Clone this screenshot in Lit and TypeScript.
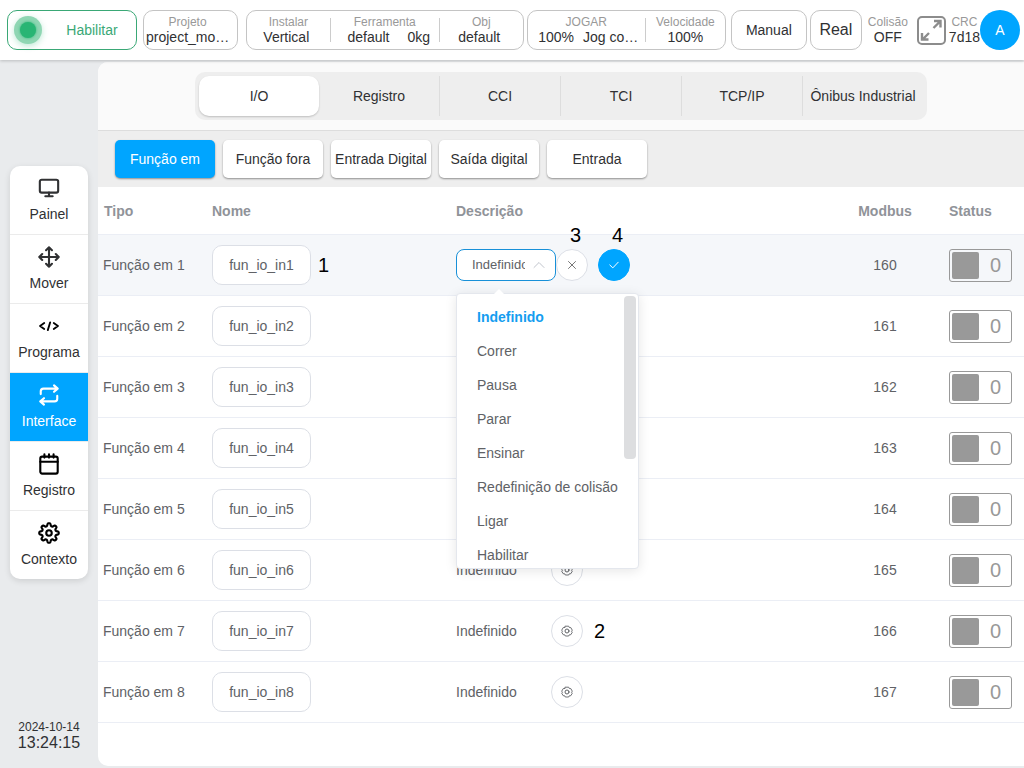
import { LitElement, html, css, svg } from "lit";
import { customElement, state } from "lit/decorators.js";
import { classMap } from "lit/directives/class-map.js";

// Closed outline of a gear with rounded teeth, centred on (cx, cy).
const gear = (cx: number, cy: number, radius: number, depth: number, teeth: number) =>
  Array.from({ length: 96 }, (_, i) => {
    const a = (i / 96) * Math.PI * 2;
    const r = radius + depth * Math.tanh(2 * Math.cos(teeth * a));
    return `${i ? "L" : "M"}${(cx + r * Math.sin(a)).toFixed(2)} ${(cy - r * Math.cos(a)).toFixed(2)}`;
  }).join("") + "Z";

const icons: Record<string, unknown> = {
  painel: svg`<rect x="2" y="3" width="20" height="14" rx="2"/><path d="M12 17v4M8 21h8"/>`,
  mover: svg`<path d="M12 1.500v21M1.500 12h21M8.800 4.600 12 1.400l3.200 3.200M8.800 19.400l3.200 3.200 3.200-3.200M4.600 8.800 1.400 12l3.200 3.200M19.400 8.800l3.200 3.200-3.200 3.200"/>`,
  programa: svg`<path d="M6.800 8.800 2.200 12l4.600 3.200M17.200 8.800l4.600 3.200-4.600 3.200M13.300 8l-2.600 8.500" stroke-width="2"/>`,
  interface: svg`<path d="M17.500 1.500 21.500 5l-4 3.500M3 11V8a3 3 0 0 1 3-3h15M6.500 22.500 2.500 19l4-3.500M21 13v3a3 3 0 0 1-3 3H3"/>`,
  registro: svg`<rect x="2.500" y="4" width="19" height="18.500" rx="2"/><path d="M2.500 9.500h19M7 1.500V5M12 1.500V5M17 1.500V5"/>`,
  contexto: svg`<circle cx="12" cy="12" r="3"/><path d=${gear(12, 12, 9.2, 1.5, 8)} />`,
};

const navItems = [
  ["painel", "Painel"],
  ["mover", "Mover"],
  ["programa", "Programa"],
  ["interface", "Interface"],
  ["registro", "Registro"],
  ["contexto", "Contexto"],
];
const tabs = ["I/O", "Registro", "CCI", "TCI", "TCP/IP", "Ônibus Industrial"];
const groups = ["Função em", "Função fora", "Entrada Digital", "Saída digital", "Entrada"];
const options = ["Indefinido", "Correr", "Pausa", "Parar", "Ensinar", "Redefinição de colisão", "Ligar", "Habilitar"];
const rows = Array.from({ length: 8 }, (_, i) => ({ n: i + 1, modbus: 160 + i }));

const base = css`
  * { box-sizing: border-box; }
  button, input, select { font: inherit; color: inherit; margin: 0; padding: 0; }
  button { cursor: pointer; background: none; border: none; }
  svg { display: block; fill: none; stroke: currentColor; stroke-linecap: round; stroke-linejoin: round; }
`;

@customElement("status-bar")
class StatusBar extends LitElement {
  static styles = [base, css`
    :host { display: flex; align-items: center; gap: 3px; height: 60px; padding: 0 4px 0 7px; background: #fff; box-shadow: 0 1px 3px rgba(0, 0, 0, 0.2); position: relative; white-space: nowrap; line-height: 16px; color: #303133; }
    .box { height: 40px; border: 1px solid #c4c4c4; border-radius: 10px; background: #fff; display: flex; align-items: center; justify-content: center; }
    .enable { width: 130px; margin-right: 3px; border-color: #3aa876; color: #3aa876; justify-content: flex-start; padding-left: 6px; }
    .led { width: 28px; height: 28px; border-radius: 50%; background: #8fd6b3; display: grid; place-items: center; box-shadow: 0 2px 6px rgba(41, 181, 116, 0.3); }
    .led::after { content: ""; width: 16px; height: 16px; border-radius: 50%; background: #29b574; box-shadow: 0 0 3px #29b574; }
    .word { flex: 1; text-align: center; padding-left: 6px; }
    .project { width: 95px; margin-right: 5px; justify-content: flex-start; padding-left: 2px; }
    .tool { flex: 278 1 0; }
    .play { flex: 199 1 0; margin-right: 2px; }
    .cell { display: flex; flex-direction: column; align-items: center; padding-bottom: 1px; }
    .cell b { font-weight: 400; font-size: 12px; line-height: 14px; color: #999; }
    .side { flex: 84 1 0; }
    .side span { padding-right: 4px; }
    .mid { flex: 110 1 0; }
    .jog { flex: 119 1 0; }
    .speed { flex: 80 1 0; }
    .pair { display: flex; gap: 9px; padding-left: 4px; }
    .mid .pair { gap: 18px; padding-left: 8px; }
    .line { width: 1px; height: 24px; background: #ccc; }
    .manual { width: 76px; }
    .real { width: 52px; font-size: 16px; }
    .collision { width: 46px; }
    .full { color: #8c8c8c; margin-left: 3px; }
    .avatar { width: 40px; height: 40px; border-radius: 50%; background: #00a5ff; color: #fff; margin-left: -3px; }
  `];

  render() {
    return html`
      <button class="box enable"><i class="led"></i><span class="word">Habilitar</span></button>
      <div class="box project"><div class="cell"><b>Projeto</b><span>project_mo…</span></div></div>
      <div class="box tool">
        <div class="cell side"><b>Instalar</b><span>Vertical</span></div><i class="line"></i>
        <div class="cell mid"><b>Ferramenta</b><div class="pair"><span>default</span><span>0kg</span></div></div><i class="line"></i>
        <div class="cell side"><b>Obj</b><span>default</span></div>
      </div>
      <div class="box play">
        <div class="cell jog"><b>JOGAR</b><div class="pair"><span>100%</span><span>Jog co…</span></div></div><i class="line"></i>
        <div class="cell speed"><b>Velocidade</b><span>100%</span></div>
      </div>
      <button class="box manual">Manual</button>
      <button class="box real">Real</button>
      <div class="cell collision"><b>Colisão</b><span>OFF</span></div>
      <button class="full" aria-label="Tela cheia">
        <svg width="29" height="29" viewBox="0 0 29 29" stroke-width="2"><rect x="1" y="1" width="27" height="27" rx="4"/><path d="M16.500 12 23 5.500M17 5h6.500v6.500M12 17l-6.500 6.500M5 17v6.500h6.500" stroke-linecap="butt" stroke-linejoin="miter" stroke-width="2.400"/></svg>
      </button>
      <div class="cell"><b>CRC</b><span>7d18</span></div>
      <button class="avatar" aria-label="Conta A">A</button>
    `;
  }
}

@customElement("side-nav")
class SideNav extends LitElement {
  static styles = [base, css`
    :host { display: flex; flex-direction: column; justify-content: space-between; padding: 106px 10px 17px; color: #303133; }
    nav { background: #fff; border-radius: 10px; overflow: hidden; box-shadow: 0 2px 6px rgba(0, 0, 0, 0.12); }
    a { display: flex; flex-direction: column; align-items: center; gap: 7px; height: 69px; padding-top: 11px; border-bottom: 1px solid #ebebeb; color: inherit; text-decoration: none; line-height: 16px; }
    a:last-child { height: 68px; border-bottom: none; }
    a.active { background: #00a5ff; color: #fff; }
    svg { stroke-width: 2.300; }
    .dark svg { color: #000; }
    .clock { text-align: center; font-size: 16px; line-height: 17px; }
    .date { font-size: 12px; line-height: 14px; }
  `];

  render() {
    return html`
      <nav>
        ${navItems.map(([id, label]) => html`
          <a href="#${id}" class=${classMap({ active: id === "interface", dark: ["programa", "registro", "contexto"].includes(id) })}>
            <svg width="22" height="22" viewBox="0 0 24 24">${icons[id]}</svg>
            <span>${label}</span>
          </a>`)}
      </nav>
      <div class="clock"><div class="date">2024-10-14</div><div>13:24:15</div></div>
    `;
  }
}

@customElement("function-select")
class FunctionSelect extends LitElement {
  @state() value = options[0];

  static styles = [base, css`
    :host { display: block; position: relative; width: 100px; }
    select { display: block; appearance: none; width: 100px; height: 32px; padding: 0 30px 0 15px; border: 1px solid #1890d8; border-radius: 8px; background: #fff; color: #606266; font-size: 13px; outline: none; text-overflow: clip; }
    .chevron { position: absolute; right: 11px; top: 12px; color: #c0c4cc; pointer-events: none; }
    .popup { position: absolute; z-index: 5; top: 44px; left: 0; width: 183px; height: 276px; border: 1px solid #e4e7ed; border-radius: 4px; background: #fff; box-shadow: 0 2px 12px rgba(0, 0, 0, 0.1); }
    .popup::before { content: ""; position: absolute; top: -5px; left: 36px; border: 6px solid transparent; border-top: none; border-bottom-color: #fff; }
    ul { margin: 0; padding: 6px 0 0; height: 274px; overflow: hidden; list-style: none; }
    li { height: 34px; line-height: 34px; padding-left: 20px; color: #606266; white-space: nowrap; cursor: pointer; }
    li.selected { color: #149df0; font-weight: 700; }
    .thumb { position: absolute; top: 2px; right: 2px; width: 12px; height: 163px; border-radius: 4px; background: #dddee0; }
  `];

  render() {
    return html`
      <select aria-label="Descrição" @change=${(e: Event) => (this.value = (e.target as HTMLSelectElement).value)}>
        ${options.map((o) => html`<option ?selected=${o === this.value}>${o}</option>`)}
      </select>
      <svg class="chevron" width="12" height="8" viewBox="0 0 12 8"><path d="M1 6.500 6 1.500l5 5"/></svg>
      <div class="popup">
        <ul role="listbox" aria-label="Descrição">
          ${options.map((o) => html`<li role="option" aria-selected=${o === this.value} class=${classMap({ selected: o === this.value })} @click=${() => (this.value = o)}>${o}</li>`)}
        </ul>
        <i class="thumb"></i>
      </div>
    `;
  }
}

@customElement("io-table")
class IoTable extends LitElement {
  static styles = [base, css`
    :host { display: block; color: #606266; }
    table { width: 100%; table-layout: fixed; border-collapse: separate; border-spacing: 0; }
    th, td { padding: 0 6px; text-align: left; border-bottom: 1px solid #ebeef5; white-space: nowrap; }
    td:first-child { padding-left: 5px; }
    th { height: 48px; color: #909399; font-weight: 700; }
    td { height: 61px; }
    .type { width: 108px; }
    .name { width: 244px; }
    .modbus { width: 116px; text-align: center; }
    .status { width: 81px; }
    .current td { background: #f5f7fa; }
    .flow { display: flex; align-items: center; }
    input { width: 99px; height: 40px; border: 1px solid #dcdfe6; border-radius: 10px; background: #fff; text-align: center; outline: none; }
    .text { width: 95px; }
    .round { position: relative; width: 32px; height: 32px; border: 1px solid #dcdfe6; border-radius: 50%; background: #fff; display: grid; place-items: center; }
    .cancel { color: #777; }
    .ok { margin-left: 10px; border-color: #00a5ff; background: #00a5ff; color: #fff; }
    .mark { font-size: 20px; line-height: 24px; color: #000; margin-left: 7px; }
    .round + .mark { margin-left: 11px; }
    .above { position: absolute; bottom: 33px; left: 0; right: 0; }
    .switch { display: flex; align-items: center; width: 63px; height: 33px; padding: 2px; border: 1px solid #999; border-radius: 3px; color: #999; font-size: 20px; }
    .knob { width: 27px; height: 27px; border-radius: 2px; background: #999; }
    .digit { flex: 1; padding-left: 3px; text-align: center; }
  `];

  private editor() {
    return html`
      <function-select></function-select>
      <button class="round cancel" aria-label="Cancelar">
        <svg width="8" height="8" viewBox="0 0 8 8"><path d="M.5.5l7 7M7.500.5l-7 7"/></svg>
        <span class="mark above">3</span>
      </button>
      <button class="round ok" aria-label="Confirmar">
        <svg width="10" height="8" viewBox="0 0 10 8"><path d="M.8 4l3 2.900L9.200 1.200"/></svg>
        <span class="mark above">4</span>
      </button>`;
  }

  private label(n: number) {
    return html`
      <span class="text">Indefinido</span>
      <button class="round" aria-label="Configurar função ${n}">
        <svg width="12" height="12" viewBox="0 0 12 12"><circle cx="6" cy="6" r="2"/><path d="M4.300 1.200h3.400l.6 1.300 1.500.1 1.500 2.600-.8 1 .8 1-1.500 2.500-1.500.100-.6 1.200H4.300l-.6-1.200-1.500-.1L.7 7.200l.8-1-.8-1 1.500-2.600 1.500-.1z" stroke-width=".9"/></svg>
      </button>
      ${n === 7 ? html`<span class="mark">2</span>` : ""}`;
  }

  render() {
    return html`
      <table>
        <thead>
          <tr><th class="type">Tipo</th><th class="name">Nome</th><th>Descrição</th><th class="modbus">Modbus</th><th class="status">Status</th></tr>
        </thead>
        <tbody>
          ${rows.map(({ n, modbus }) => html`
            <tr class=${classMap({ current: n === 1 })}>
              <td>Função em ${n}</td>
              <td><div class="flow"><input aria-label="Nome ${n}" .value=${`fun_io_in${n}`} />${n === 1 ? html`<span class="mark">1</span>` : ""}</div></td>
              <td><div class="flow">${n === 1 ? this.editor() : this.label(n)}</div></td>
              <td class="modbus">${modbus}</td>
              <td><button class="switch" role="switch" aria-checked="false" aria-label="Status ${n}"><i class="knob"></i><span class="digit">0</span></button></td>
            </tr>`)}
        </tbody>
      </table>
    `;
  }
}

@customElement("app-root")
class AppRoot extends LitElement {
  @state() tab = 0;
  @state() group = 0;

  static styles = [base, css`
    :host { display: grid; grid-template-rows: 60px 1fr; min-height: 100vh; background: #e9ebed; font: 14px/20px "Liberation Sans", Arial, sans-serif; color: #303133; }
    .body { display: grid; grid-template-columns: 98px 1fr; }
    main { margin: 2px 0; background: #fff; border-radius: 10px 0 0 10px; overflow: hidden; min-width: 0; }
    .tabs { display: flex; justify-content: center; padding: 10px 16px; background: #fafafa; border-bottom: 1px solid #ddd; }
    .track { display: flex; width: 732px; padding: 4px; border-radius: 10px; background: #eee; }
    .tab { flex: 1 1 0; height: 40px; white-space: nowrap; border-right: 1px solid #ddd; }
    .tab:last-child, .tab.on { border-right: none; }
    .tab.on { background: #fff; border-radius: 10px; box-shadow: 0 1px 2px rgba(0, 0, 0, 0.2); }
    .groups { display: flex; gap: 8px; padding: 9px 17px; background: #eee; }
    .group { width: 100px; height: 38px; border-radius: 5px; background: #fff; white-space: nowrap; box-shadow: 0 1px 2px rgba(0, 0, 0, 0.4); }
    .group.on { background: #00a5ff; color: #fff; }
  `];

  render() {
    return html`
      <status-bar></status-bar>
      <div class="body">
        <side-nav></side-nav>
        <main>
          <div class="tabs"><div class="track">
            ${tabs.map((t, i) => html`<button class=${classMap({ tab: true, on: i === this.tab })} @click=${() => (this.tab = i)}>${t}</button>`)}
          </div></div>
          <div class="groups">
            ${groups.map((g, i) => html`<button class=${classMap({ group: true, on: i === this.group })} @click=${() => (this.group = i)}>${g}</button>`)}
          </div>
          <io-table></io-table>
        </main>
      </div>
    `;
  }
}
